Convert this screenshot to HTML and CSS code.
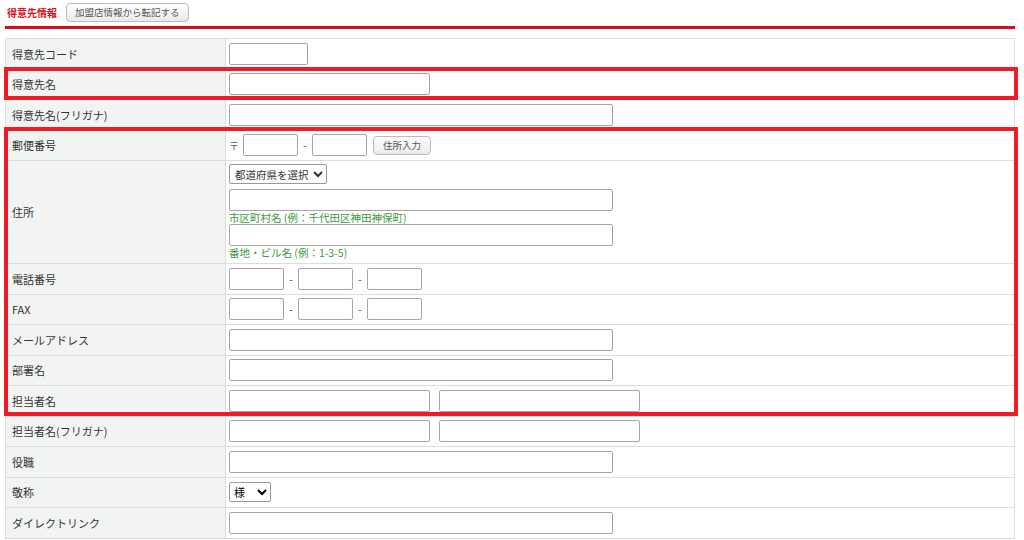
FILE: index.html
```html
<!DOCTYPE html>
<html lang="ja">
<head>
    <meta charset="UTF-8">
    <title>得意先情報</title>
    <link rel="stylesheet" href="styles.css">
</head>
<body>
<div class="page">
    <div class="section-head">
        <span class="section-title">得意先情報</span>
        <button class="copy-btn">加盟店情報から転記する</button>
    </div>

    <div class="table-wrap">
        <table class="form-table">
            <tr>
                <th>得意先コード</th>
                <td><input class="w-code" type="text"></td>
            </tr>
            <tr>
                <th>得意先名</th>
                <td><input class="w-mid" type="text"></td>
            </tr>
            <tr>
                <th>得意先名(フリガナ)</th>
                <td><input class="w-long" type="text"></td>
            </tr>
            <tr>
                <th>郵便番号</th>
                <td>
                    <div class="inline">
                        <span class="mark">〒</span>
                        <input class="w-short" type="text">
                        <span class="dash">-</span>
                        <input class="w-short" type="text">
                        <button class="small-btn">住所入力</button>
                    </div>
                </td>
            </tr>
            <tr class="tall">
                <th>住所</th>
                <td>
                    <div class="address">
                        <select class="pref"><option>都道府県を選択</option></select>
                        <input class="w-long" type="text">
                        <span class="hint">市区町村名 (例：千代田区神田神保町)</span>
                        <input class="w-long" type="text">
                        <span class="hint">番地・ビル名 (例：1-3-5)</span>
                    </div>
                </td>
            </tr>
            <tr>
                <th>電話番号</th>
                <td>
                    <div class="inline">
                        <input class="w-short" type="text">
                        <span class="dash">-</span>
                        <input class="w-short" type="text">
                        <span class="dash">-</span>
                        <input class="w-short" type="text">
                    </div>
                </td>
            </tr>
            <tr>
                <th>FAX</th>
                <td>
                    <div class="inline">
                        <input class="w-short" type="text">
                        <span class="dash">-</span>
                        <input class="w-short" type="text">
                        <span class="dash">-</span>
                        <input class="w-short" type="text">
                    </div>
                </td>
            </tr>
            <tr>
                <th>メールアドレス</th>
                <td><input class="w-long" type="text"></td>
            </tr>
            <tr>
                <th>部署名</th>
                <td><input class="w-long" type="text"></td>
            </tr>
            <tr>
                <th>担当者名</th>
                <td>
                    <div class="inline wide-gap">
                        <input class="w-mid" type="text">
                        <input class="w-mid" type="text">
                    </div>
                </td>
            </tr>
            <tr>
                <th>担当者名(フリガナ)</th>
                <td>
                    <div class="inline wide-gap">
                        <input class="w-mid" type="text">
                        <input class="w-mid" type="text">
                    </div>
                </td>
            </tr>
            <tr>
                <th>役職</th>
                <td><input class="w-long" type="text"></td>
            </tr>
            <tr>
                <th>敬称</th>
                <td><select class="honorific"><option>様</option></select></td>
            </tr>
            <tr>
                <th>ダイレクトリンク</th>
                <td><input class="w-long" type="text"></td>
            </tr>
        </table>

        <!-- highlight frames drawn over the table -->
        <div class="highlight hl-name"></div>
        <div class="highlight hl-contact"></div>
    </div>
</div>
</body>
</html>
```

FILE: styles.css
```css
body {
    margin: 0;
    padding: 0;
    background-color: #ffffff;
    font-family: "Noto Sans CJK JP", "Noto Sans", sans-serif;
    font-size: 11px;
    color: #333;
}
.page {
    padding: 0 9px 0 5px;
}
.section-head {
    display: flex;
    align-items: center;
    gap: 9px;
    height: 26px;
    padding-left: 2px;
    border-bottom: 3px solid #d4101c;
}
.section-title {
    color: #d4101c;
    font-weight: bold;
    font-size: 10px;
    position: relative;
    top: -1px;
}
.copy-btn {
    height: 19px;
    padding: 0 8px;
    font-family: inherit;
    font-size: 9.5px;
    color: #555;
    background: linear-gradient(#ffffff, #eaeaea);
    border: 1px solid #bbb;
    border-radius: 4px;
    position: relative;
    top: -1px;
}
.table-wrap {
    position: relative;
    margin-top: 9px;
}
.form-table {
    width: 100%;
    border-collapse: collapse;
    border: 1px solid #dcdcdc;
}
.form-table tr {
    height: 30.5px;
}
.form-table th,
.form-table td {
    border: 1px solid #dcdcdc;
    padding: 0 3px;
    box-sizing: border-box;
    vertical-align: middle;
}
.form-table th {
    width: 220px;
    padding-left: 6px;
    background-color: #f2f3f3;
    text-align: left;
    font-weight: normal;
    color: #333;
}
input[type="text"] {
    box-sizing: border-box;
    height: 22px;
    margin: 0;
    padding: 0 3px;
    border: 1px solid #a5a5a5;
    border-radius: 2px;
    background: #fff;
    display: block;
}
.w-code { width: 79px; }
.w-mid { width: 201px; }
.w-long { width: 384px; }
.w-short { width: 55px; }
.inline {
    display: flex;
    align-items: center;
}
.inline.wide-gap {
    gap: 9px;
}
.mark {
    width: 14px;
    font-size: 10px;
    color: #555;
}
.dash {
    width: 14px;
    text-align: center;
    color: #555;
}
.small-btn {
    margin-left: 6px;
    height: 19px;
    padding: 0 9px;
    font-family: inherit;
    font-size: 9.5px;
    color: #555;
    background: linear-gradient(#ffffff, #eaeaea);
    border: 1px solid #bbb;
    border-radius: 4px;
}
.address {
    display: flex;
    flex-direction: column;
    align-items: flex-start;
    padding: 3px 0 4px;
}
.pref {
    height: 20px;
    padding: 0 1px;
    font-family: inherit;
    font-size: 10.5px;
    color: #333;
    border: 1px solid #999;
    border-radius: 2px;
    background: #fff;
    margin-bottom: 5px;
}
.hint {
    color: #3a9a3a;
    font-size: 10.5px;
    line-height: 13px;
}
.honorific {
    height: 20px;
    width: 42px;
    font-family: inherit;
    font-size: 11px;
    border: 1px solid #999;
    border-radius: 2px;
    background: #fff;
}
.highlight {
    position: absolute;
    left: -1px;
    right: -3px;
    box-sizing: border-box;
    border: 4px solid #ee1c25;
    pointer-events: none;
}
.hl-name {
    top: 29px;
    height: 33px;
}
.hl-contact {
    top: 89px;
    height: 289px;
}
```
